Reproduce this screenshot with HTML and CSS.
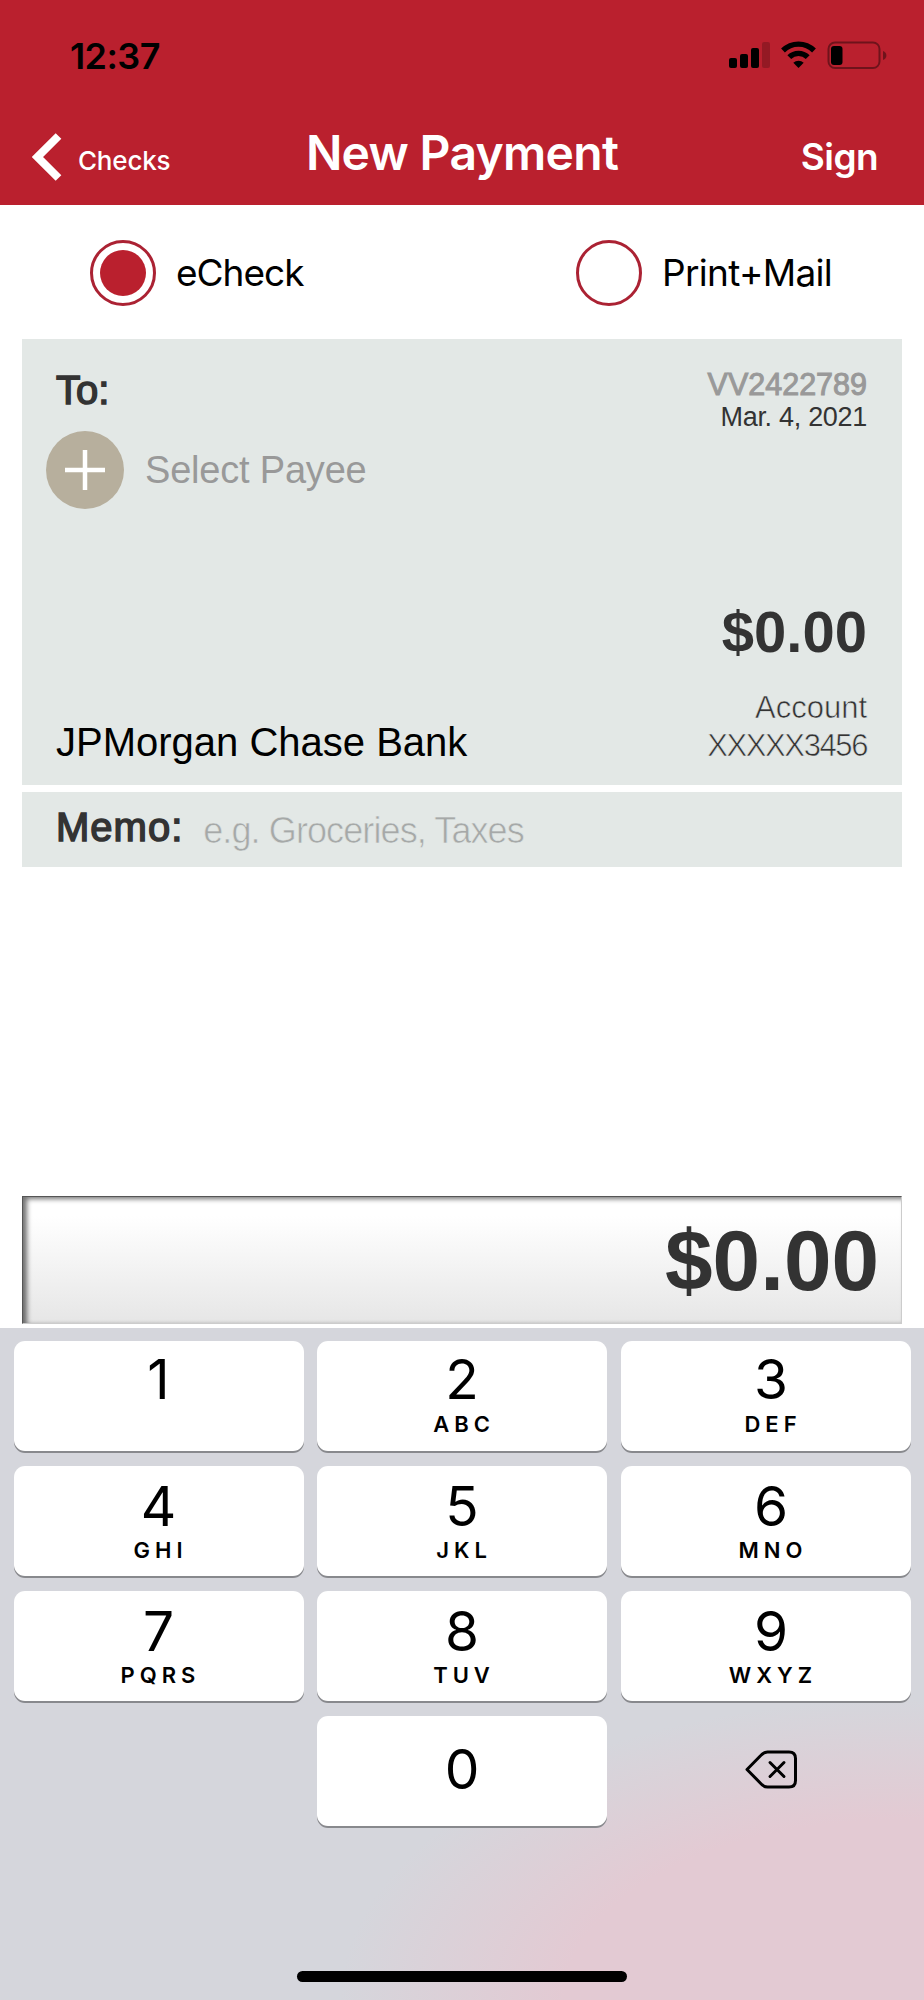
FILE: index.html
```html
<!DOCTYPE html>
<html lang="en">
<head>
  <meta charset="utf-8">
  <meta name="viewport" content="width=device-width, initial-scale=1.0">
  <title>New Payment</title>
  <link rel="stylesheet" href="styles.css">
</head>
<body>
  <header class="header">
    <div class="status-bar">
      <span class="time">12:37</span>
      <svg class="status-icons" width="158" height="30" viewBox="0 0 158 30">
        <rect x="0" y="18" width="8" height="10" rx="2"/>
        <rect x="11" y="14" width="8" height="14" rx="2"/>
        <rect x="22" y="8" width="8" height="20" rx="2"/>
        <rect x="33" y="2" width="8" height="26" rx="2" opacity=".2"/>
        <g fill="none" stroke="#000" stroke-width="5.4">
          <path d="M54 10.5a22 22 0 0 1 31 0"/>
          <path d="M60.3 17.2a13 13 0 0 1 18.4 0"/>
        </g>
        <path d="M69.5 28l-5.2-5.2a7.5 7.5 0 0 1 10.4 0z"/>
        <rect x="99.500" y="2.500" width="51" height="25.500" rx="6.500" fill="none" stroke="#000" stroke-width="2" opacity=".4"/>
        <rect x="102" y="6" width="11.500" height="19" rx="3"/>
        <path d="M154 11c4.500 1.500 4.500 7.500 0 9z" opacity=".4"/>
      </svg>
    </div>
    <nav class="nav-bar">
      <a class="back">
        <svg width="30" height="48" viewBox="0 0 30 48">
          <path d="M26.500 3L5.500 24l21 21" fill="none" stroke="#fff" stroke-width="8"/>
        </svg>
        <span>Checks</span>
      </a>
      <h1>New Payment</h1>
      <a class="sign">Sign</a>
    </nav>
  </header>

  <main class="content">
    <div class="methods">
      <label class="method"><span class="radio checked"></span><span>eCheck</span></label>
      <label class="method"><span class="radio"></span><span class="print">Print+Mail</span></label>
    </div>

    <section class="check">
      <div class="check-top">
        <div class="payee">
          <div class="to">To:</div>
          <div class="select">
            <svg width="78" height="78" viewBox="0 0 78 78">
              <circle cx="39" cy="39" r="39" fill="#b7af9d"/>
              <path d="M39 19v40M19 39h40" stroke="#fff" stroke-width="4.500"/>
            </svg>
            <span>Select Payee</span>
          </div>
        </div>
        <div class="info">
          <div class="number">VV2422789</div>
          <div class="date">Mar. 4, 2021</div>
        </div>
      </div>
      <div class="check-bottom">
        <div class="bank">JPMorgan Chase Bank</div>
        <div class="totals">
          <div class="total">$0.00</div>
          <div class="account">Account</div>
          <div class="account account-number">XXXXX3456</div>
        </div>
      </div>
    </section>

    <section class="memo">
      <span class="memo-label">Memo:</span>
      <span class="memo-hint">e.g. Groceries, Taxes</span>
    </section>

    <div class="amount">$0.00</div>
  </main>

  <div class="keyboard">
    <div class="keys">
      <div class="key first"><b>1</b></div>
      <div class="key first"><b>2</b><i>ABC</i></div>
      <div class="key first"><b>3</b><i>DEF</i></div>
      <div class="key"><b>4</b><i>GHI</i></div>
      <div class="key"><b>5</b><i>JKL</i></div>
      <div class="key"><b>6</b><i>MNO</i></div>
      <div class="key"><b>7</b><i>PQRS</i></div>
      <div class="key"><b>8</b><i>TUV</i></div>
      <div class="key"><b>9</b><i>WXYZ</i></div>
      <div></div>
      <div class="key zero"><b>0</b></div>
      <div class="delete">
        <svg width="53" height="39" viewBox="0 0 53 39">
          <g fill="none" stroke="#000" stroke-width="3" stroke-linecap="round" stroke-linejoin="round">
            <path d="M2 19.500L16 5.300Q19 2 22.500 2H44q6.500 0 6.500 6.500v22q0 6.500-6.500 6.500H22.500Q19 37 16 33.700z"/>
            <path d="M25 12.500l14 14M39 12.500l-14 14"/>
          </g>
        </svg>
      </div>
    </div>
    <div class="home-bar"></div>
  </div>
</body>
</html>
```
FILE: styles.css
```css
* {
  box-sizing: border-box;
}

body {
  margin: 0;
  width: 924px;
  height: 2000px;
  display: flex;
  flex-direction: column;
  background-color: #fff;
  color: #333;
  font-family: "Liberation Sans", Arial, sans-serif;
  white-space: nowrap;
  overflow: hidden;
}

/* red top area */
.header {
  height: 205px;
  background-color: #ba202e;
  color: #fff;
  font-family: Inter, sans-serif;
}

.status-bar {
  height: 112px;
  padding: 0 37px 0 70px;
  display: flex;
  justify-content: space-between;
  align-items: center;
  color: #000;
}

.time {
  font-size: 36px;
  font-weight: 600;
  letter-spacing: -.6px;
}

.status-icons {
  margin-bottom: 2px;
}

.nav-bar {
  height: 93px;
  padding: 0 32px 3px;
  display: grid;
  grid-template-columns: 1fr auto 1fr;
  align-items: center;
}

.back {
  display: flex;
  align-items: center;
  gap: 16px;
  font-size: 26px;
  font-weight: 500;
  letter-spacing: -.2px;
}

.back span {
  padding-top: 7px;
}

h1 {
  margin: 0;
  padding-bottom: 9px;
  font-size: 48px;
  font-weight: 600;
  letter-spacing: -.7px;
}

.sign {
  margin-right: 14px;
  padding-bottom: 2px;
  font-size: 37px;
  font-weight: 600;
  letter-spacing: -.6px;
  text-align: right;
}

.content {
  height: 1123px;
  padding: 0 22px;
  display: flex;
  flex-direction: column;
}

.methods {
  height: 134px;
  padding: 1px 70px 0 68px;
  display: flex;
  justify-content: space-between;
  align-items: center;
  color: #000;
  font-family: Inter, sans-serif;
  font-size: 37px;
  letter-spacing: -1px;
}

.method {
  display: flex;
  align-items: center;
  gap: 20px;
}

.print {
  letter-spacing: -.7px;
}

.radio {
  width: 66px;
  height: 66px;
  padding: 7px;
  border: 3px solid #ab2233;
  border-radius: 50%;
}

.checked {
  background: #ba202e content-box;
}

/* the check */
.check {
  height: 446px;
  padding: 28px 35px 0 34px;
  background-color: #e3e8e6;
}

.check-top,
.check-bottom {
  display: flex;
  justify-content: space-between;
}

/* medium weight */
.to,
.memo-label {
  font-size: 40px;
  -webkit-text-stroke: 1.5px #333;
}

.to {
  line-height: 46px;
}

.select {
  margin: 18px 0 0 -10px;
  display: flex;
  align-items: center;
  gap: 21px;
  color: #999;
  font-size: 38px;
  letter-spacing: -.2px;
}

.info,
.totals {
  text-align: right;
}

.number {
  color: #999;
  font-size: 30.5px;
  line-height: 34px;
  -webkit-text-stroke: 1px #999;
}

.date {
  font-size: 27px;
  letter-spacing: -.3px;
  line-height: 32px;
}

.check-bottom {
  margin-top: 90px;
  align-items: flex-end;
}

.bank {
  color: #000;
  font-size: 40px;
  line-height: 46px;
}

.total {
  margin-bottom: 24px;
  font-size: 58px;
  font-weight: bold;
  line-height: 66px;
}

/* light weight, the stroke thins the letters */
.account,
.memo-hint {
  -webkit-text-stroke: .6px #e3e8e6;
}

.account {
  font-size: 31px;
  line-height: 38px;
}

.account-number {
  letter-spacing: -1.4px;
}

.memo {
  height: 75px;
  margin-top: 7px;
  padding: 0 34px;
  display: flex;
  align-items: center;
  gap: 20px;
  background-color: #e3e8e6;
}

.memo-label {
  padding-bottom: 5px;
  letter-spacing: 1px;
}

.memo-hint {
  padding-top: 3px;
  color: #a6a9a8;
  font-size: 36px;
  letter-spacing: -.9px;
}

.amount {
  height: 128px;
  margin-top: 329px;
  padding-right: 22px;
  border: 1px solid #ccc;
  border-top-color: #555;
  border-left-color: #555;
  box-shadow: inset 4px 2px 5px rgba(0, 0, 0, .55);
  background: linear-gradient(#fff 15%, #e6e6e6);
  font-size: 85.5px;
  font-weight: bold;
  line-height: 127px;
  text-align: right;
}

/* number pad */
.keyboard {
  height: 672px;
  padding: 13px 13px 18px;
  display: flex;
  flex-direction: column;
  justify-content: space-between;
  align-items: center;
  background:
    radial-gradient(ellipse 560px 300px at 900px 672px, #e3cad3 60%, rgba(227, 202, 211, 0)),
    #d5d6dc;
  color: #000;
  font-family: Inter, sans-serif;
}

.keys {
  width: 897px;
  display: grid;
  grid-template-columns: repeat(3, 290px);
  grid-auto-rows: 110px;
  gap: 15px 13.5px;
}

.key {
  padding-top: 19px;
  display: flex;
  flex-direction: column;
  align-items: center;
  border-radius: 11px;
  background-color: #fff;
  box-shadow: 0 2px 0 #88898d;
}

.key:nth-child(3n) {
  padding-left: 11px;
}

.key b {
  font-size: 55px;
  font-weight: 400;
  line-height: 42px;
}

.key i {
  margin-top: 12px;
  padding-left: 4px;
  font-size: 22px;
  font-style: normal;
  font-weight: 600;
  letter-spacing: 5px;
  line-height: 22px;
}

.first {
  padding-top: 17px;
}

.first i {
  margin-top: 13px;
}

.zero {
  padding-top: 32px;
}

.delete {
  padding: 0 0 4px 11px;
  display: flex;
  justify-content: center;
  align-items: center;
}

.home-bar {
  width: 330px;
  height: 11px;
  border-radius: 6px;
  background-color: #000;
}
```
